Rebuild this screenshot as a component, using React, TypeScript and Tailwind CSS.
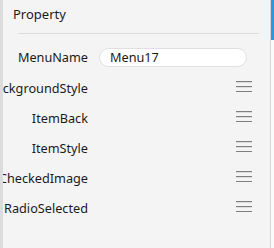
import React from "react";

const rows = [
  "BackgroundStyle",
  "ItemBack",
  "ItemStyle",
  "CheckedImage",
  "RadioSelected",
];

function MenuIcon() {
  return (
    <svg width="16" height="11" viewBox="0 0 16 11" className="block">
      <rect x="0" y="0" width="16" height="1.2" fill="#7f7f7f" />
      <rect x="0" y="5" width="16" height="1.2" fill="#7f7f7f" />
      <rect x="0" y="10" width="16" height="1.2" fill="#7f7f7f" />
    </svg>
  );
}

export default function App() {
  return (
    <div
      className="w-[274px] h-[248px] flex bg-[#f4f4f4] text-[12.7px] text-[#1b1b1b]"
      style={{ fontFamily: '"Noto Sans", "Open Sans", sans-serif' }}
    >
      <div className="w-[3px] bg-[#dcdcdc]" />
      <div className="flex-1 flex flex-col">
        <div className="h-[33px] pl-[10px] pt-[4px] leading-[20px] text-[13px]">Property</div>
        <div className="ml-[15px] mr-[11px] h-px bg-[#dcdcdc]" />
        <div className="flex items-center h-[19px] mt-[14px]">
          <div className="w-[85px] text-right leading-[19px] whitespace-nowrap overflow-hidden">
            MenuName
          </div>
          <div className="ml-[11px] w-[148px] h-[19px] rounded-full bg-white border border-[#e0e0e0] pl-[10px] leading-[17px]">
            Menu17
          </div>
        </div>
        <div className="flex flex-col mt-[6px]">
          {rows.map((r) => (
            <div key={r} className="flex items-center h-[30px]">
              <div className="w-[85px] flex justify-end overflow-hidden whitespace-nowrap leading-[20px]">
                <span className="shrink-0">{r}</span>
              </div>
              <div className="ml-auto mr-[18px] -mt-[3px]">
                <MenuIcon />
              </div>
            </div>
          ))}
        </div>
      </div>
      <div className="w-px bg-[#d6d6d6]" />
      <div className="w-[3px] bg-[#fafafa]">
        <div className="h-[40px] bg-[#2a9ae0]" />
      </div>
    </div>
  );
}
